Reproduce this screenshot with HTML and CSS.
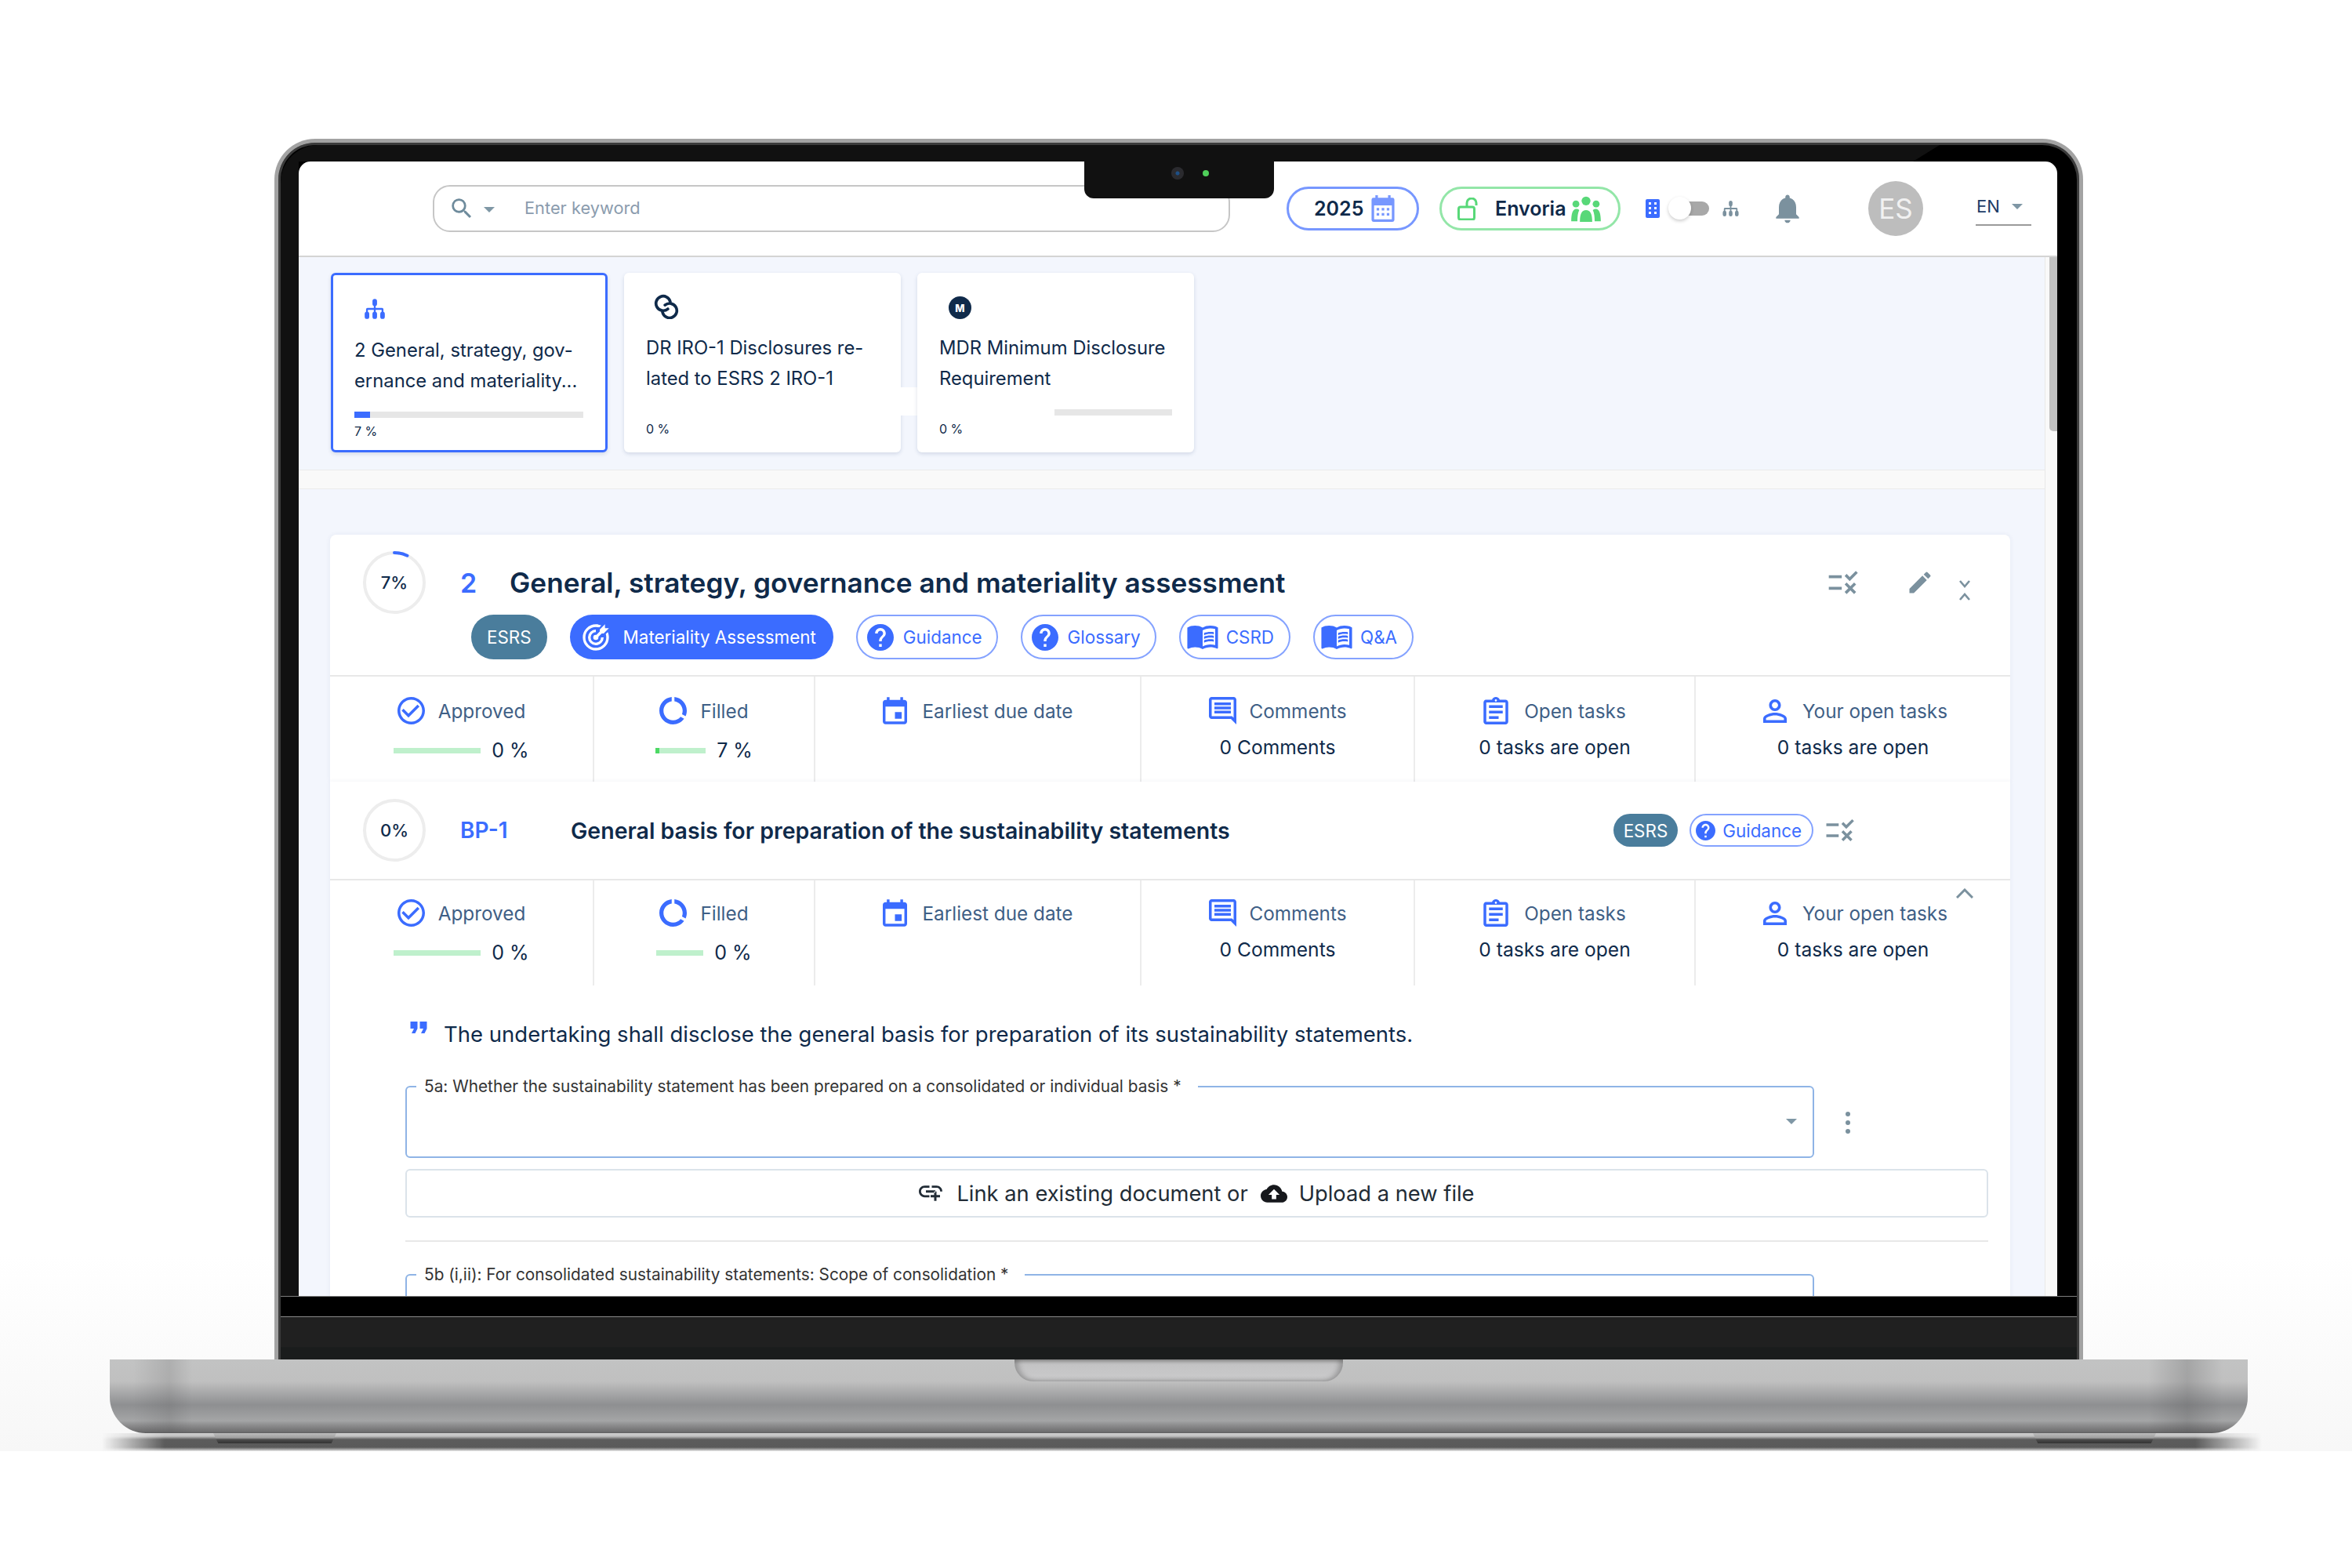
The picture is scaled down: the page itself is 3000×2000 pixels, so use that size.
FILE: index.html
```html
<!DOCTYPE html>
<html lang="en">
<head>
    <meta charset="UTF-8" />
    <title>Disclosure requirements</title>
    <link rel="stylesheet" href="styles.css">
</head>
<body>

<svg class="icon-defs" width="0" height="0">
    <symbol id="i-search" viewBox="0 0 24 24"><path d="M15.5 14h-.79l-.28-.27A6.471 6.471 0 0 0 16 9.5 6.5 6.5 0 1 0 9.5 16c1.61 0 3.09-.59 4.23-1.57l.27.28v.79l5 4.99L20.49 19l-4.99-5zm-6 0C7.01 14 5 11.99 5 9.5S7.01 5 9.5 5 14 7.01 14 9.5 11.99 14 9.5 14z"/></symbol>
    <symbol id="i-calendar-grid" viewBox="3 1 18 21"><path d="M8 1v2h8V1h2v2h1.500A1.500 1.500 0 0 1 21 4.500v16a1.500 1.500 0 0 1-1.500 1.500h-15A1.500 1.500 0 0 1 3 20.500v-16A1.500 1.500 0 0 1 4.500 3H6V1zM5 9v11h14V9zm2 2h2v2H7zm4 0h2v2h-2zm4 0h2v2h-2zm-8 4h2v2H7zm4 0h2v2h-2zm4 0h2v2h-2z"/></symbol>
    <symbol id="i-groups" viewBox="0 0 24 21"><circle cx="12" cy="4" r="3.600"/><circle cx="3.800" cy="6.500" r="2.800"/><circle cx="20.200" cy="6.500" r="2.800"/><path d="M7 21c0-6.500 1.500-9.500 5-9.500s5 3 5 9.500z"/><path d="M0 20.500c0-6 1.200-10 4-10 1 0 1.800.3 2.500.9C5.400 13.500 5 16.500 5 20.500z"/><path d="M24 20.500c0-6-1.200-10-4-10-1 0-1.800.3-2.500.9 1.100 2.100 1.500 5.100 1.500 9.100z"/></symbol>
    <symbol id="i-sitemap" viewBox="0 0 24 24"><rect x="9.500" y="1" width="5" height="8" rx="2.500"/><path d="M11 8h2v3h7a1.500 1.500 0 0 1 1.500 1.500V16h-2v-3H13v3h-2v-3H4.500v3h-2v-3.500A1.500 1.500 0 0 1 4 11h7z"/><rect x="1" y="15" width="5" height="8" rx="2.500"/><rect x="9.500" y="15" width="5" height="8" rx="2.500"/><rect x="18" y="15" width="5" height="8" rx="2.500"/></symbol>
    <symbol id="i-bell" viewBox="0 0 24 24"><path d="M12 22c1.100 0 2-.9 2-2h-4c0 1.100.89 2 2 2zm6-6v-5c0-3.070-1.640-5.640-4.500-6.320V4c0-.83-.67-1.500-1.500-1.500s-1.500.67-1.500 1.500v.68C7.630 5.360 6 7.920 6 11v5l-2 2v1h16v-1l-2-2z"/></symbol>
    <symbol id="i-rule" viewBox="0 0 24 24"><path d="M16.540 11L13 7.460l1.410-1.410 2.120 2.120 4.240-4.240 1.410 1.410L16.540 11zM11 7H2v2h9V7zm10 6.410L19.590 12 17 14.590 14.410 12 13 13.410 15.590 16 13 18.590 14.410 20 17 17.410 19.590 20 21 18.590 18.410 16 21 13.410zM11 15H2v2h9v-2z"/></symbol>
    <symbol id="i-edit" viewBox="0 0 24 24"><path d="M3 17.250V21h3.750L17.810 9.940l-3.750-3.750L3 17.250zM20.710 7.040a.996.996 0 0 0 0-1.410l-2.340-2.340a.996.996 0 0 0-1.410 0l-1.830 1.830 3.750 3.750 1.830-1.830z"/></symbol>
    <symbol id="i-target" viewBox="0 0 24 24"><path d="M12 2A10 10 0 0 0 2 12 10 10 0 0 0 12 22 10 10 0 0 0 22 12C22 10.540 21.680 9.150 21.120 7.880L19.600 9.400C19.860 10.210 20 11.090 20 12A8 8 0 0 1 12 20A8 8 0 0 1 4 12A8 8 0 0 1 12 4C12.910 4 13.790 4.140 14.600 4.400L16.130 2.880C14.850 2.320 13.460 2 12 2M19 2L15 6V7.500L12.450 10.050C12.300 10 12.150 10 12 10A2 2 0 0 0 10 12A2 2 0 0 0 12 14A2 2 0 0 0 14 12C14 11.850 14 11.700 13.950 11.550L16.500 9H18L22 5H19V2M12 6A6 6 0 0 0 6 12A6 6 0 0 0 12 18A6 6 0 0 0 18 12H16A4 4 0 0 1 12 16A4 4 0 0 1 8 12A4 4 0 0 1 12 8V6Z"/></symbol>
    <symbol id="i-help" viewBox="2 2 20 20"><path d="M12 2C6.480 2 2 6.480 2 12s4.480 10 10 10 10-4.480 10-10S17.520 2 12 2zm1 17h-2v-2h2v2zm2.070-7.750l-.9.92C13.450 12.900 13 13.500 13 15h-2v-.5c0-1.100.45-2.100 1.170-2.830l1.240-1.260c.37-.36.59-.86.59-1.410 0-1.100-.9-2-2-2s-2 .9-2 2H8c0-2.210 1.790-4 4-4s4 1.790 4 4c0 .88-.36 1.680-.93 2.250z"/></symbol>
    <symbol id="i-book" viewBox="1 4 22 18"><path d="M21 5c-1.110-.35-2.330-.5-3.500-.5-1.950 0-4.050.4-5.500 1.500-1.450-1.100-3.550-1.500-5.500-1.500S2.450 4.900 1 6v14.650c0 .25.25.5.5.5.1 0 .15-.05.25-.05C3.100 20.450 5.050 20 6.500 20c1.950 0 4.050.4 5.500 1.500 1.350-.85 3.800-1.500 5.500-1.500 1.650 0 3.350.3 4.750 1.050.1.05.15.05.25.05.25 0 .5-.25.5-.5V6c-.6-.45-1.250-.75-2-1zm0 13.500c-1.100-.35-2.300-.5-3.500-.5-1.700 0-4.150.65-5.500 1.500V8c1.350-.85 3.800-1.500 5.500-1.500 1.200 0 2.400.15 3.500.5v11.500z"/><path d="M17.500 10.500c.88 0 1.730.09 2.500.26V9.240c-.79-.15-1.640-.24-2.500-.24-1.700 0-3.240.29-4.500.83v1.660c1.130-.64 2.700-.99 4.500-.99zM13 12.490v1.660c1.130-.64 2.700-.99 4.500-.99.88 0 1.730.09 2.500.26V11.900c-.79-.15-1.640-.24-2.500-.24-1.700 0-3.240.3-4.500.83zM17.500 14.330c-1.700 0-3.240.29-4.500.83v1.660c1.130-.64 2.700-.99 4.500-.99.88 0 1.730.09 2.500.26v-1.520c-.79-.16-1.640-.24-2.500-.24z"/></symbol>
    <symbol id="i-approved" viewBox="2 2 20 20"><path d="M16.590 7.580L10 14.170l-3.590-3.580L5 12l5 5 8-8zM12 2C6.480 2 2 6.480 2 12s4.480 10 10 10 10-4.480 10-10S17.520 2 12 2zm0 18c-4.420 0-8-3.580-8-8s3.580-8 8-8 8 3.580 8 8-3.580 8-8 8z"/></symbol>
    <symbol id="i-filled" viewBox="2 2 20 20"><path d="M13 2.050v3.030c3.390.49 6 3.390 6 6.920 0 .9-.18 1.750-.48 2.540l2.600 1.530c.56-1.240.88-2.620.88-4.070 0-5.180-3.950-9.450-9-9.950zM12 19c-3.870 0-7-3.130-7-7 0-3.530 2.610-6.430 6-6.920V2.050c-5.060.5-9 4.760-9 9.950 0 5.520 4.470 10 9.990 10 3.310 0 6.240-1.610 8.060-4.090l-2.600-1.530C16.170 17.980 14.210 19 12 19z"/></symbol>
    <symbol id="i-event" viewBox="3 1 18 20"><path d="M17 12h-5v5h5v-5zM16 1v2H8V1H6v2H5c-1.110 0-1.990.9-1.990 2L3 19c0 1.100.89 2 2 2h14c1.100 0 2-.9 2-2V5c0-1.100-.9-2-2-2h-1V1h-2zm3 18H5V8h14v11z"/></symbol>
    <symbol id="i-comment" viewBox="2 2 20 20"><path d="M21.990 4c0-1.100-.89-2-1.990-2H4c-1.100 0-2 .9-2 2v12c0 1.100.9 2 2 2h14l4 4-.01-18zM20 4v13.170L18.830 16H4V4h16zM6 12h12v2H6zm0-3h12v2H6zm0-3h12v2H6z"/></symbol>
    <symbol id="i-tasks" viewBox="3 1 18 20"><path d="M7 15h7v2H7zm0-4h10v2H7zm0-4h10v2H7zm12-4h-4.180C14.400 1.840 13.300 1 12 1c-1.300 0-2.400.84-2.820 2H5c-.14 0-.27.01-.4.04-.39.08-.74.28-1.010.55-.18.18-.33.4-.43.64-.1.23-.16.49-.16.77v14c0 .27.06.54.16.78s.25.45.43.64c.27.27.62.47 1.010.55.13.02.26.03.4.03h14c1.100 0 2-.9 2-2V5c0-1.100-.9-2-2-2zm-7-.25c.41 0 .75.34.75.75s-.34.75-.75.75-.75-.34-.75-.75.34-.75.75-.75zM19 19H5V5h14v14z"/></symbol>
    <symbol id="i-person" viewBox="4 4 16 16"><path d="M12 5.900c1.160 0 2.100.94 2.100 2.100s-.94 2.100-2.100 2.100S9.900 9.160 9.900 8s.94-2.100 2.100-2.100m0 9c2.970 0 6.100 1.460 6.100 2.100v1.100H5.900V17c0-.64 3.130-2.100 6.100-2.100M12 4C9.790 4 8 5.790 8 8s1.790 4 4 4 4-1.790 4-4-1.790-4-4-4zm0 9c-2.670 0-8 1.340-8 4v3h16v-3c0-2.660-5.330-4-8-4z"/></symbol>
    <symbol id="i-quote" viewBox="5 7 14 10"><path d="M6 17h3l2-4V7H5v6h3zm8 0h3l2-4V7h-6v6h3z"/></symbol>
    <symbol id="i-link" viewBox="2 7 20 13"><path d="M8 11h8v2H8zm12.100 1H22c0-2.760-2.240-5-5-5h-4v1.900h4c1.710 0 3.100 1.390 3.100 3.100zM3.900 12c0-1.710 1.390-3.100 3.100-3.100h4V7H7c-2.760 0-5 2.240-5 5s2.240 5 5 5h4v-1.900H7c-1.710 0-3.100-1.390-3.100-3.100zM17 12h-2v3h-3v2h3v3h2v-3h3v-2h-3z"/></symbol>
    <symbol id="i-cloud" viewBox="0 4 24 16"><path d="M19.350 10.040C18.670 6.590 15.640 4 12 4 9.110 4 6.600 5.640 5.350 8.040 2.340 8.360 0 10.910 0 14c0 3.310 2.690 6 6 6h13c2.760 0 5-2.240 5-5 0-2.640-2.050-4.780-4.650-4.960zM14 13v4h-4v-4H7l5-5 5 5h-3z"/></symbol>
</svg>

<div class="laptop">
    <div class="lid">
        <div class="notch"><span class="lens"></span><span class="led"></span></div>

        <div class="screen">
            <header class="topbar">
                <div class="search">
                    <svg class="search-icon"><use href="#i-search"/></svg>
                    <span class="caret search-caret"></span>
                    <span class="search-text">Enter keyword</span>
                </div>
                <div class="pill pill-year">
                    <span>2025</span>
                    <svg class="year-icon"><use href="#i-calendar-grid"/></svg>
                </div>
                <div class="pill pill-org">
                    <svg class="lock-icon line-icon" viewBox="0 0 27 29"><rect x="1.500" y="12" width="20" height="16" rx="2.500"/><path d="M12 12V7a6 6 0 0 1 12 0v3"/></svg>
                    <span>Envoria</span>
                    <svg class="groups-icon"><use href="#i-groups"/></svg>
                </div>
                <svg class="building-icon" viewBox="0 0 18 24"><rect width="18" height="24" rx="2"/><path class="building-windows" d="M4 4h3v3H4zm7 0h3v3h-3zm-7 6h3v3H4zm7 0h3v3h-3zm-7 6h3v3H4zm7 0h3v3h-3z"/></svg>
                <div class="toggle"><span class="toggle-knob"></span></div>
                <svg class="org-icon"><use href="#i-sitemap"/></svg>
                <svg class="bell-icon"><use href="#i-bell"/></svg>
                <div class="avatar">ES</div>
                <div class="lang"><span>EN</span><span class="caret"></span></div>
            </header>

            <div class="workspace">
                <main class="content">
                    <div class="cards">
                        <div class="card card-active">
                            <svg class="card-icon card-icon-blue"><use href="#i-sitemap"/></svg>
                            <p class="card-title">2 General, strategy, gov-<br>ernance and materiality...</p>
                            <div class="card-bar"><div class="card-bar-fill" style="width: 7%"></div></div>
                            <p class="card-pct">7 %</p>
                        </div>
                        <div class="card card-dr">
                            <svg class="card-icon card-icon-chain line-icon" viewBox="1 0 24 26"><path d="M14.500 15.500A7.500 7.500 0 1 1 17 8"/><path d="M11.500 11.500A7.500 7.500 0 1 1 9 19"/></svg>
                            <p class="card-title">DR IRO-1 Disclosures re-<br>lated to ESRS 2 IRO-1</p>
                            <div class="card-bar card-bar-hidden"></div>
                            <p class="card-pct">0 %</p>
                        </div>
                        <div class="card">
                            <span class="card-badge">M</span>
                            <p class="card-title">MDR Minimum Disclosure<br>Requirement</p>
                            <div class="card-bar card-bar-short"></div>
                            <p class="card-pct">0 %</p>
                        </div>
                    </div>

                    <div class="band"></div>

                    <section class="panel">
                        <div class="panel-head">
                            <div class="head-row">
                                <div class="ring">
                                    <svg class="ring-arc line-icon" viewBox="0 0 80 80"><circle class="ring-track" cx="40" cy="40" r="38"/><circle class="ring-value" cx="40" cy="40" r="38" stroke-dasharray="17 222" transform="rotate(-90 40 40)"/></svg>
                                    <span>7%</span>
                                </div>
                                <span class="head-num">2</span>
                                <h1 class="head-title">General, strategy, governance and materiality assessment</h1>
                                <svg class="tool tool-rule"><use href="#i-rule"/></svg>
                                <svg class="tool tool-edit"><use href="#i-edit"/></svg>
                                <svg class="tool-fold line-icon" viewBox="0 0 16 26"><path d="M2 1l6 7 6-7"/><path d="M2 25l6-7 6 7"/></svg>
                            </div>
                            <div class="chips">
                                <span class="chip chip-esrs">ESRS</span>
                                <span class="chip chip-solid"><svg class="chip-target"><use href="#i-target"/></svg>Materiality Assessment</span>
                                <span class="chip chip-help"><svg class="chip-q"><use href="#i-help"/></svg>Guidance</span>
                                <span class="chip chip-help"><svg class="chip-q"><use href="#i-help"/></svg>Glossary</span>
                                <span class="chip chip-book"><svg class="chip-b"><use href="#i-book"/></svg>CSRD</span>
                                <span class="chip chip-book"><svg class="chip-b"><use href="#i-book"/></svg>Q&amp;A</span>
                            </div>
                        </div>
                        <div class="stats">
                            <div class="stat">
                                <div class="stat-label"><svg class="stat-icon"><use href="#i-approved"/></svg>Approved</div>
                                <div class="stat-progress"><div class="stat-bar stat-bar-long"></div>0 %</div>
                            </div>
                            <div class="stat">
                                <div class="stat-label"><svg class="stat-icon"><use href="#i-filled"/></svg>Filled</div>
                                <div class="stat-progress"><div class="stat-bar stat-bar-mid"><div class="stat-bar-fill" style="width: 7%"></div></div>7 %</div>
                            </div>
                            <div class="stat">
                                <div class="stat-label"><svg class="stat-icon stat-icon-event"><use href="#i-event"/></svg>Earliest due date</div>
                            </div>
                            <div class="stat">
                                <div class="stat-label"><svg class="stat-icon"><use href="#i-comment"/></svg>Comments</div>
                                <div class="stat-value">0 Comments</div>
                            </div>
                            <div class="stat">
                                <div class="stat-label"><svg class="stat-icon stat-icon-tasks"><use href="#i-tasks"/></svg>Open tasks</div>
                                <div class="stat-value">0 tasks are open</div>
                            </div>
                            <div class="stat">
                                <div class="stat-label"><svg class="stat-icon stat-icon-person"><use href="#i-person"/></svg>Your open tasks</div>
                                <div class="stat-value">0 tasks are open</div>
                            </div>
                        </div>
                    </section>

                    <section class="panel panel-sub">
                        <div class="sub-head">
                            <div class="ring">
                                <svg class="ring-arc line-icon" viewBox="0 0 80 80"><circle class="ring-track" cx="40" cy="40" r="38"/></svg>
                                <span>0%</span>
                            </div>
                            <span class="sub-code">BP-1</span>
                            <h2 class="sub-title">General basis for preparation of the sustainability statements</h2>
                            <span class="chip chip-esrs chip-small">ESRS</span>
                            <span class="chip chip-help chip-small"><svg class="chip-q"><use href="#i-help"/></svg>Guidance</span>
                            <svg class="tool tool-rule tool-rule-sub"><use href="#i-rule"/></svg>
                        </div>
                        <div class="stats stats-open">
                            <svg class="stats-chevron line-icon" viewBox="0 0 22 13"><path d="M1 12l10-10 10 10"/></svg>
                            <div class="stat">
                                <div class="stat-label"><svg class="stat-icon"><use href="#i-approved"/></svg>Approved</div>
                                <div class="stat-progress"><div class="stat-bar stat-bar-long"></div>0 %</div>
                            </div>
                            <div class="stat">
                                <div class="stat-label"><svg class="stat-icon"><use href="#i-filled"/></svg>Filled</div>
                                <div class="stat-progress"><div class="stat-bar stat-bar-sub"></div>0 %</div>
                            </div>
                            <div class="stat">
                                <div class="stat-label"><svg class="stat-icon stat-icon-event"><use href="#i-event"/></svg>Earliest due date</div>
                            </div>
                            <div class="stat">
                                <div class="stat-label"><svg class="stat-icon"><use href="#i-comment"/></svg>Comments</div>
                                <div class="stat-value">0 Comments</div>
                            </div>
                            <div class="stat">
                                <div class="stat-label"><svg class="stat-icon stat-icon-tasks"><use href="#i-tasks"/></svg>Open tasks</div>
                                <div class="stat-value">0 tasks are open</div>
                            </div>
                            <div class="stat">
                                <div class="stat-label"><svg class="stat-icon stat-icon-person"><use href="#i-person"/></svg>Your open tasks</div>
                                <div class="stat-value">0 tasks are open</div>
                            </div>
                        </div>

                        <div class="form">
                            <p class="quote"><svg class="quote-icon"><use href="#i-quote"/></svg>The undertaking shall disclose the general basis for preparation of its sustainability statements.</p>

                            <div class="field-row">
                                <fieldset class="field">
                                    <legend>5a: Whether the sustainability statement has been prepared on a consolidated or individual basis *</legend>
                                    <span class="caret field-caret"></span>
                                </fieldset>
                                <div class="kebab"><span></span><span></span><span></span></div>
                            </div>

                            <div class="upload">
                                <svg class="upload-link"><use href="#i-link"/></svg>
                                <span>Link an existing document or</span>
                                <svg class="upload-cloud"><use href="#i-cloud"/></svg>
                                <span>Upload a new file</span>
                            </div>

                            <div class="form-divider"></div>

                            <div class="field-row">
                                <fieldset class="field">
                                    <legend>5b (i,ii): For consolidated sustainability statements: Scope of consolidation *</legend>
                                </fieldset>
                            </div>
                        </div>
                    </section>
                </main>

                <div class="scrollbar"><div class="scrollbar-thumb"></div></div>
            </div>
        </div>

        <div class="chin"></div>
        <div class="hinge"></div>
    </div>

    <div class="base">
        <div class="base-notch"></div>
    </div>
    <div class="base-under">
        <div class="foot"></div>
        <div class="foot"></div>
    </div>
</div>

</body>
</html>
```

FILE: styles.css
```css
* {
  box-sizing: border-box;
}
body {
  margin: 0;
  background: #fff;
  font-family: Inter, "Liberation Sans", sans-serif;
  color: #0f2a4a;
}
p, h1, h2 {
  margin: 0;
}
svg {
  display: block;
  flex: none;
  fill: currentColor;
}
.line-icon {
  fill: none;
}
.icon-defs {
  position: absolute;
}

/* laptop frame */
.laptop {
  height: 1851px;
  padding-top: 177px;
  background: linear-gradient(to bottom, #fff 1600px, #f7f7f7 1851px);
}
.lid {
  position: relative;
  width: 2307px;
  height: 1557px;
  margin-left: 350px;
  padding: 24px 28px 0 26px;
  border: 5px solid #a3a3a3;
  border-bottom: 0;
  border-radius: 52px 52px 0 0;
  background: #000;
  box-shadow: inset 0 0 0 3px #3c3c3c;
}
.lid::before {
  content: "";
  position: absolute;
  inset: 3px 3px 0 3px;
  background: #111;
  border-radius: 48px 48px 0 0;
  clip-path: polygon(0 0, 2116px 0, 2082px 21px, 23px 21px, 23px 100%, 0 100%);
}
.notch {
  position: absolute;
  z-index: 2;
  left: 1028px;
  top: 24px;
  width: 242px;
  height: 47px;
  background: #111;
  border-radius: 0 0 12px 12px;
}
.lens {
  position: absolute;
  left: 111px;
  top: 7px;
  width: 16px;
  height: 16px;
  border-radius: 50%;
  background: radial-gradient(circle, #1d4f86 0 2px, #2b2b2f 3px 100%);
}
.led {
  position: absolute;
  left: 151px;
  top: 11px;
  width: 8px;
  height: 8px;
  border-radius: 50%;
  background: #4fcf5a;
}
.screen {
  position: relative;
  display: flex;
  flex-direction: column;
  width: 2243px;
  height: 1447px;
  overflow: hidden;
  background: #fff;
  border-radius: 15px 15px 0 0;
}
.chin {
  position: relative;
  height: 27px;
  margin: 0 -25px 0 -23px;
  background: #000;
  border-top: 1px solid #7d7d7d;
  border-bottom: 1px solid #8a8a8a;
}
.hinge {
  position: relative;
  height: 54px;
  margin: 0 -25px 0 -23px;
  background: linear-gradient(to bottom, #202020 70%, #1a1c1c 72%);
}
.base {
  display: flex;
  justify-content: center;
  width: 2727px;
  height: 94px;
  margin-left: 140px;
  border-radius: 0 0 46px 46px;
  background:
    linear-gradient(to right, rgba(0,0,0,0) 30px, rgba(70,70,72,.16) 76px, rgba(0,0,0,0) 105px, rgba(0,0,0,0) 2600px, rgba(70,70,72,.24) 2650px, rgba(0,0,0,0) 2695px),
    linear-gradient(to bottom, #c2c3c3 0, #c0c0c0 28px, #8e8f91 58px, #a4a5a6 78px, #8c8c8d 84px, #6f6f70 92px, #5f5f60 100%);
}
.base-notch {
  width: 419px;
  height: 28px;
  border-radius: 0 0 24px 24px;
  background: linear-gradient(to bottom, #a8a8a8 0, #c3c3c4 6px, #cbcbcc 100%);
  box-shadow: inset 5px 0 6px rgba(0, 0, 0, 0.22), inset -5px 0 6px rgba(0, 0, 0, 0.22);
}
.base-under {
  position: relative;
  display: flex;
  justify-content: space-between;
  width: 2780px;
  height: 23px;
  margin-left: 120px;
  padding: 0 150px 0 152px;
}
.base-under::before {
  content: "";
  position: absolute;
  inset: 0;
  background: linear-gradient(to bottom, #d0d0d0 0, #c0c0c0 4px, #5c5c5c 8px, #5a5a5a 18px, #adadad 21px, #eee 23px);
  -webkit-mask-image: linear-gradient(to right, transparent 10px, #000 90px, #000 2680px, transparent 2765px);
  mask-image: linear-gradient(to right, transparent 10px, #000 90px, #000 2680px, transparent 2765px);
}
.foot {
  position: relative;
  width: 157px;
  height: 13px;
  background: linear-gradient(to bottom, #bcbcbc 0, #9f9f9f 6px, #4d4d4d 8px, #333 100%);
  clip-path: polygon(0 0, 100% 0, 96% 100%, 4% 100%);
}

/* top bar */
.topbar {
  flex: none;
  display: flex;
  align-items: center;
  height: 122px;
  padding-left: 171px;
  border-bottom: 2px solid #d4d4d4;
}
.search {
  display: flex;
  align-items: center;
  width: 1017px;
  height: 60px;
  padding-left: 18px;
  border: 2px solid #c6c6c6;
  border-radius: 22px;
}
.search-icon {
  width: 34px;
  height: 34px;
  color: #6e8b9c;
}
.caret {
  display: block;
  width: 0;
  height: 0;
  border-left: 7px solid transparent;
  border-right: 7px solid transparent;
  border-top: 7px solid #7f97a5;
}
.search-caret {
  margin: 2px 0 0 11px;
}
.search-text {
  margin: -2px 0 0 38px;
  font-size: 21.8px;
  color: #8b9cae;
}
.pill {
  display: flex;
  align-items: center;
  height: 56px;
  border-radius: 28px;
  border: 3px solid;
  font-size: 25px;
  font-weight: 600;
}
.pill-year {
  width: 169px;
  margin-left: 72px;
  padding-left: 32px;
  border-color: #7797ff;
}
.year-icon {
  width: 30px;
  height: 34px;
  margin-left: 10px;
  color: #7797ff;
}
.pill-org {
  width: 231px;
  margin-left: 26px;
  padding-left: 20px;
  border-color: #93e6a8;
}
.lock-icon {
  width: 27px;
  height: 29px;
  margin-right: 21px;
  stroke: #58d878;
  stroke-width: 3;
}
.groups-icon {
  width: 38px;
  height: 33px;
  margin-left: 6px;
  color: #58d878;
}
.building-icon {
  width: 18px;
  height: 24px;
  margin-left: 32px;
  color: #3b6cff;
}
.building-windows {
  fill: #fff;
}
.toggle {
  position: relative;
  width: 40px;
  height: 18px;
  margin-left: 23px;
  border-radius: 0 9px 9px 0;
  background: #a8a8a8;
}
.toggle-knob {
  position: absolute;
  left: -12px;
  top: -6px;
  width: 29px;
  height: 29px;
  border-radius: 50%;
  background: #fff;
  box-shadow: 0 2px 4px rgba(0, 0, 0, 0.2);
}
.org-icon {
  width: 23px;
  height: 22px;
  margin-left: 16px;
  color: #7b919e;
}
.bell-icon {
  width: 44px;
  height: 44px;
  margin-left: 39px;
  color: #7b919e;
}
.avatar {
  display: flex;
  align-items: center;
  justify-content: center;
  width: 70px;
  height: 70px;
  margin-left: 81px;
  border-radius: 50%;
  background: #bdbdbd;
  color: #f1f1f1;
  font-size: 35px;
}
.lang {
  display: flex;
  align-items: center;
  justify-content: space-between;
  width: 71px;
  height: 42px;
  margin: 2px 0 0 67px;
  padding: 0 11px 6px 1px;
  border-bottom: 2px solid #9a9a9a;
  font-size: 22px;
  color: #1d3c66;
}

/* page under the bar */
.workspace {
  flex: 1;
  display: flex;
  min-height: 0;
}
.content {
  flex: 1;
  min-width: 0;
  background: #f3f6fd;
}
.scrollbar {
  flex: none;
  width: 16px;
  padding-left: 6px;
  background: #f9f9f9;
  border-left: 1px solid #e8e8e8;
}
.scrollbar-thumb {
  width: 10px;
  height: 222px;
  margin-left: -1px;
  background: #c1c1c1;
  border-radius: 0 0 0 5px;
}

/* cards */
.cards {
  position: relative;
  display: flex;
  gap: 21px;
  height: 271px;
  padding: 20px 0 0 41px;
}
.card {
  position: relative;
  width: 353px;
  height: 229px;
  padding: 29px 28px 0;
  background: #fff;
  border-radius: 6px;
  box-shadow: 0 2px 5px rgba(40, 60, 110, 0.16);
}
.card-active {
  padding-left: 27px;
  border: 3px solid #3b6cff;
}
.card-icon {
  width: 28px;
  height: 28px;
}
.card-icon-blue {
  color: #3b6cff;
  margin-left: 12px;
}
.card-icon-chain {
  margin-left: 10px;
  width: 32px;
  height: 32px;
  margin-top: -2px;
  margin-bottom: -2px;
  stroke: #0f2a4a;
  stroke-width: 3;
  stroke-linecap: round;
}
.card-badge {
  display: flex;
  align-items: center;
  justify-content: center;
  width: 29px;
  height: 29px;
  margin: 1px 0 -2px 12px;
  border-radius: 50%;
  background: #0f2a4a;
  color: #fff;
  font-size: 13px;
  font-weight: 800;
}
.card-title {
  margin-top: 19px;
  font-size: 23.8px;
  line-height: 39px;
  white-space: nowrap;
}
.card-bar {
  height: 8px;
  margin-top: 20px;
  background: #e6e6e6;
}
.card-bar-fill {
  height: 100%;
  background: #3b6cff;
}
.card-bar-hidden {
  background: transparent;
}
.card-bar-short {
  margin-left: 147px;
}
/* white strip that runs across the gap, as in the reference */
.card-dr::after {
  content: "";
  position: absolute;
  left: 100%;
  top: 146px;
  width: 21px;
  height: 36px;
  background: #fff;
}
.card-pct {
  margin-top: 7px;
  font-size: 16px;
  line-height: 20px;
}
.band {
  height: 25px;
  background: #f9f9f9;
  border-top: 1px solid #ebebeb;
  border-bottom: 1px solid #ebebeb;
  margin-bottom: 58px;
}

/* panels */
.panel {
  position: relative;
  width: 2143px;
  margin-left: 40px;
  background: #fff;
  border-radius: 8px 8px 0 0;
  box-shadow: 0 0 6px rgba(40, 60, 110, 0.07);
}
.panel-sub {
  padding-top: 1px;
  border-radius: 0;
  min-height: 700px;
}
.panel-head {
  height: 179px;
  padding-top: 21px;
}
.head-row {
  display: flex;
  align-items: center;
  height: 80px;
  padding-left: 42px;
}
.ring {
  position: relative;
  flex: none;
  display: flex;
  align-items: center;
  justify-content: center;
  width: 80px;
  height: 80px;
  font-size: 22px;
  font-weight: 500;
}
.ring-arc {
  position: absolute;
  inset: 0;
  width: 80px;
  height: 80px;
}
.ring-track {
  stroke: #ededed;
  stroke-width: 4;
}
.ring-value {
  stroke: #3b6cff;
  stroke-width: 4;
  stroke-linecap: round;
}
.head-num {
  width: 63px;
  margin-left: 44px;
  font-size: 34px;
  font-weight: 600;
  color: #3b6cff;
}
.head-title {
  flex: 1;
  font-size: 35.2px;
  font-weight: 600;
  white-space: nowrap;
}
.tool {
  color: #7b919e;
}
.tool-rule {
  width: 44px;
  height: 44px;
}
.tool-edit {
  width: 36px;
  height: 36px;
  margin-left: 58px;
}
.tool-fold {
  width: 16px;
  height: 26px;
  margin: 20px 50px 0 31px;
  stroke: #7b919e;
  stroke-width: 2.600;
}
.chips {
  display: flex;
  gap: 29px;
  margin-top: 1px;
  padding-left: 180px;
}
.chip {
  display: flex;
  align-items: center;
  height: 57px;
  border-radius: 29px;
  font-size: 22.4px;
  white-space: nowrap;
  color: #3b6cff;
  border: 2px solid #84a2ff;
}
.chip-esrs {
  padding: 0 20px;
  background: #4a7d9c;
  border: 0;
  color: #fff;
}
.chip-solid {
  gap: 15px;
  padding: 0 22px 0 13px;
  background: #3b6cff;
  border: 0;
  color: #fff;
}
.chip-target {
  width: 40px;
  height: 40px;
}
.chip-help {
  gap: 12px;
  padding: 0 18px 0 12px;
}
.chip-q {
  width: 34px;
  height: 34px;
}
.chip-book {
  gap: 10px;
  padding: 0 19px 0 8px;
}
.chip-b {
  width: 40px;
  height: 32px;
}
.chip-small {
  height: 42px;
}

/* stats row */
.stats {
  position: relative;
  display: grid;
  grid-template-columns: 335px 282px 416px 349px 358px 403px;
  height: 136px;
  border-top: 2px solid #e8e8e8;
}
.stat {
  display: flex;
  flex-direction: column;
  align-items: center;
  padding-top: 25px;
  border-left: 2px solid #ececec;
}
.stat:first-of-type {
  border-left: 0;
}
.stats-open .stat {
  padding-top: 23px;
}
.stat-label {
  display: flex;
  align-items: center;
  gap: 17px;
  height: 37px;
  font-size: 24.3px;
  color: #3f5f86;
}
.stat-icon {
  width: 35px;
  height: 35px;
  color: #3b6cff;
}
.stat-icon-event {
  width: 31px;
  margin-right: 3px;
}
.stat-icon-tasks {
  width: 32px;
  margin-right: 3px;
}
.stat-icon-person {
  width: 30px;
  height: 30px;
  margin: 0 3px 0 6px;
}
.stat-progress {
  display: flex;
  align-items: center;
  gap: 14px;
  height: 30px;
  margin-top: 17px;
  font-size: 25px;
}
.stat-bar {
  height: 7px;
  background: #bff0cc;
}
.stat-bar-long {
  width: 111px;
}
.stat-bar-mid {
  width: 64px;
}
.stat-bar-sub {
  width: 60px;
}
.stat-bar-fill {
  height: 100%;
  background: #4cd964;
}
.stat-value {
  margin-top: 13px;
  font-size: 24.6px;
  line-height: 30px;
}
.stats-chevron {
  position: absolute;
  right: 47px;
  top: 10px;
  width: 22px;
  height: 13px;
  stroke: #7b919e;
  stroke-width: 3;
}

/* BP-1 */
.sub-head {
  display: flex;
  align-items: center;
  height: 123px;
  padding: 0 200px 1px 42px;
}
.sub-code {
  width: 141px;
  margin-left: 44px;
  font-size: 28px;
  font-weight: 600;
  color: #3b6cff;
}
.sub-title {
  flex: 1;
  font-size: 28.5px;
  font-weight: 600;
  white-space: nowrap;
}
.chip-small.chip-esrs {
  padding: 0 13px;
  margin-right: 15px;
}
.chip-small.chip-help {
  gap: 9px;
  padding: 0 13px 0 6px;
}
.chip-small .chip-q {
  width: 25px;
  height: 25px;
}
.tool-rule-sub {
  width: 42px;
  height: 42px;
  margin-left: 13px;
  margin-right: -4px;
}

/* requirement form */
.form {
  padding: 44px 28px 0 96px;
}
.quote {
  position: relative;
  display: flex;
  padding-left: 6px;
  font-size: 27.5px;
  line-height: 36px;
  white-space: nowrap;
}
.quote-icon {
  width: 22px;
  height: 15px;
  margin: 2px 21px 0 0;
  color: #3b6cff;
}
.field-row {
  display: flex;
  align-items: center;
  margin-top: 37px;
}
.field {
  width: 1797px;
  height: 103px;
  margin: 0;
  padding: 0;
  border: 2px solid #8fb4e6;
  border-radius: 6px;
}
.field legend {
  margin-left: 12px;
  padding: 0 21px 0 10px;
  font-size: 20.8px;
  line-height: 24px;
  color: #333;
  white-space: nowrap;
}
.field-caret {
  margin: 29px 20px 0 auto;
}
.kebab {
  display: flex;
  flex-direction: column;
  gap: 5px;
  margin: 12px 0 0 40px;
}
.kebab span {
  width: 6px;
  height: 6px;
  border-radius: 50%;
  background: #7b919e;
}
.upload {
  display: flex;
  align-items: center;
  justify-content: center;
  height: 62px;
  margin-top: 14px;
  border: 2px solid #dbe3ea;
  border-radius: 6px;
  font-size: 27.3px;
  color: #222c36;
}
.upload-link {
  width: 30px;
  height: 20px;
  margin-right: 18px;
}
.upload-cloud {
  width: 34px;
  height: 23px;
  margin: 0 15px 0 16px;
  color: #16181c;
}
.form-divider {
  height: 2px;
  margin-top: 29px;
  background: #e8e8e8;
}
.form-divider + .field-row {
  margin-top: 30px;
}
```
